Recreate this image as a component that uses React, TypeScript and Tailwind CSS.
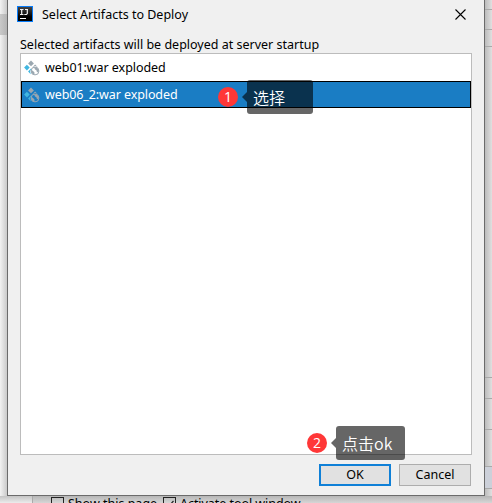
import type { ReactNode } from 'react';

function IdeaLogo() {
  return (
    <svg width="16" height="16" viewBox="0 0 16 16">
      <defs>
        <linearGradient id="ideaShade" x1="0" y1="0" x2="0" y2="1">
          <stop offset="0" stopColor="#444" />
          <stop offset="0.7" stopColor="#000" />
        </linearGradient>
      </defs>
      <rect width="16" height="16" fill="#087cfa" />
      <rect x="1" y="1" width="14" height="14" fill="url(#ideaShade)" />
      <path d="M3 3.5h3.5M4.7 3v6M3 8.5h3.5M8 3.5h3M10.3 3v4.6L9.5 8.5H7.3" stroke="#f2f2f2" strokeWidth="1.2" fill="none" />
      <rect x="3" y="12" width="6" height="1" fill="#fff" />
    </svg>
  );
}

function ArtifactIcon() {
  return (
    <svg width="16" height="16" viewBox="0 0 16 16" className="shrink-0">
      <path d="M7 .5 9.9 3.4 7 6.3 4.1 3.4z" fill="#9aa7b0" />
      <path d="M2.9 4.8 5.7 7.6 2.9 10.4 .1 7.6z" fill="#40b6e0" />
      <path d="M7 8.6 7.4 8.9 6.1 11 6.7 14.2 4.1 11.5z" fill="#40b6e0" />
      <path d="M11.1 4.6 13.6 7.1 11.2 6.1 8.5 7.2z" fill="#9aa7b0" />
      <circle cx="11" cy="11" r="3.9" fill="none" stroke="#9aa7b0" strokeWidth="1" />
      <path d="M7.2 9.8 9.4 11.2 10.6 12.8 10.2 14.7C8.2 14.3 6.8 12.3 7.2 9.8zM10 7.2 13 7.6 14.8 10.2 13.9 12.2 12.8 11.7 12.4 10.3 11 9.6z" fill="#9aa7b0" />
    </svg>
  );
}

function Step({ n, w, className, children }: { n: number; w: string; className: string; children: ReactNode }) {
  return (
    <div className={`absolute flex items-center ${className}`}>
      <span className="flex h-5 w-5 items-center justify-center rounded-full bg-[#ff3737] font-['Open_Sans',sans-serif] text-[14px] leading-none text-white">{n}</span>
      <svg width="5" height="10" viewBox="0 0 5 10" className="ml-1">
        <path d="M5 0v10L0 5z" fill="#000" fillOpacity=".6" />
      </svg>
      <div className={`flex h-[34px] items-center rounded-[3px] bg-black/60 pb-px pl-[6px] font-['Noto_Sans_CJK_SC',sans-serif] text-[16px] font-[350] text-white ${w}`}>{children}</div>
    </div>
  );
}

function Backdrop() {
  return (
    <div className="flex h-[503px] w-[492px] flex-col justify-between bg-[#c9c9c9]">
      <div className="flex h-[496px] justify-between">
        <div className="flex w-[7px] flex-col bg-linear-to-r from-[#f2f2f2] to-[#cacaca]">
          <div className="mt-[14px] h-[21px] bg-linear-to-r from-[#c9c9c9] to-[#b4b4b4]" />
        </div>
        <div className="flex w-[7px] flex-col bg-linear-to-r from-[#bcbcbc] to-[#e0e0e0] *:shrink-0 *:border-b *:border-[#a9a9a9]">
          <div className="h-[10px]" />
          <div className="h-5" />
          <div className="h-[17px]" />
          <div className="h-[331px]" />
          <div className="h-[21px]" />
          <div className="h-[31px]" />
          <div className="h-[37px]" />
          <div className="h-[22px] bg-[#ccd0d9]" />
        </div>
      </div>
      <div className="flex h-[7px] overflow-hidden bg-linear-to-b from-[#b6b6b6] to-[#d6d6d6] font-['Noto_Sans',sans-serif] text-[12.5px] leading-4 text-black">
        <div className="w-[33px] shrink-0 border-r border-[#aaa] bg-linear-to-b from-[#c4c4c4] to-[#ececec]" />
        <span className="mt-px ml-[18px] size-[13px] shrink-0 border border-[#222]" />
        <span className="ml-1 w-[95px] shrink-0 whitespace-nowrap">Show this page</span>
        <span className="mt-px flex size-[13px] shrink-0 border border-[#222]">
          <svg width="11" height="11" viewBox="0 0 11 11"><path d="M2 5.5 4.5 8.5 9.5 3" fill="none" stroke="#222" strokeWidth="1.2" /></svg>
        </span>
        <span className="ml-1 tracking-[-0.05px] whitespace-nowrap">Activate tool window</span>
      </div>
    </div>
  );
}

export default function App() {
  return (
    <div className="relative h-[503px] w-[492px] overflow-hidden">
      <Backdrop />
      <div className="absolute top-0 left-[7px] flex h-[496px] w-[478px] flex-col border-x border-b border-[#6b6b6b] bg-[#f0f0f0] font-['Noto_Sans',sans-serif] text-[12.5px] text-black">
        <header className="flex h-[31px] items-center pr-[18px] pl-[9px]">
          <div className="mt-[-3px]"><IdeaLogo /></div>
          <h1 className="mt-[-1px] ml-[9px] flex-1 text-[12.5px] leading-4">Select Artifacts to Deploy</h1>
          <svg width="11" height="11" viewBox="0 0 11 11" className="mt-[-3px]">
            <path d="M.5.5l10 10M10.5.5l-10 10" stroke="#000" strokeWidth="1.1" />
          </svg>
        </header>
        <p className="mt-[6px] ml-3 h-4 leading-4 whitespace-nowrap">Selected artifacts will be deployed at server startup</p>
        <ul className="ml-3 h-[402px] w-[452px] border border-[#bcbcbc] bg-white">
          <li className="flex h-[27px] items-center gap-[5px] pl-[3px]"><ArtifactIcon /><span className="pt-0.5 tracking-[-0.06px]">web01:war exploded</span></li>
          <li className="flex h-[27px] items-center gap-[5px] border border-black bg-[#1a7dc4] pl-[2px] text-white"><ArtifactIcon /><span className="pt-0.5 tracking-[-0.1px]">web06_2:war exploded</span></li>
        </ul>
        <footer className="mt-[9px] mr-[13px] flex justify-end gap-2">
          <button className="h-[22px] w-[72px] border-2 border-[#0f80d7] bg-[#e1e1e1] leading-4">OK</button>
          <button className="h-[22px] w-[72px] border border-[#adadad] bg-[#e1e1e1] leading-4">Cancel</button>
        </footer>
      </div>
      <Step n={1} w="w-[66px]" className="top-[80px] left-[218px]">选择</Step>
      <Step n={2} w="w-[69px]" className="top-[426px] left-[307px]">点击ok</Step>
    </div>
  );
}
